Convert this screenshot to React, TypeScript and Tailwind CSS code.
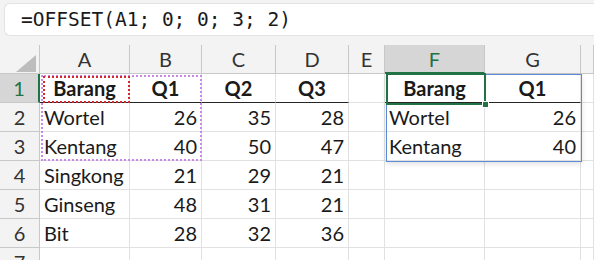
const COLS = ["A", "B", "C", "D", "E", "F", "G", ""];
const WIDTHS = "grid-cols-[40px_90px_72px_74px_73px_36px_100px_96px_13px]";

type Cell = { v: string; kind?: "head" | "text" | "num" };

const ROWS: Cell[][] = [
  [
    { v: "Barang", kind: "head" },
    { v: "Q1", kind: "head" },
    { v: "Q2", kind: "head" },
    { v: "Q3", kind: "head" },
    { v: "" },
    { v: "Barang", kind: "head" },
    { v: "Q1", kind: "head" },
    { v: "" },
  ],
  [
    { v: "Wortel", kind: "text" },
    { v: "26", kind: "num" },
    { v: "35", kind: "num" },
    { v: "28", kind: "num" },
    { v: "" },
    { v: "Wortel", kind: "text" },
    { v: "26", kind: "num" },
    { v: "" },
  ],
  [
    { v: "Kentang", kind: "text" },
    { v: "40", kind: "num" },
    { v: "50", kind: "num" },
    { v: "47", kind: "num" },
    { v: "" },
    { v: "Kentang", kind: "text" },
    { v: "40", kind: "num" },
    { v: "" },
  ],
  [
    { v: "Singkong", kind: "text" },
    { v: "21", kind: "num" },
    { v: "29", kind: "num" },
    { v: "21", kind: "num" },
    { v: "" },
    { v: "" },
    { v: "" },
    { v: "" },
  ],
  [
    { v: "Ginseng", kind: "text" },
    { v: "48", kind: "num" },
    { v: "31", kind: "num" },
    { v: "21", kind: "num" },
    { v: "" },
    { v: "" },
    { v: "" },
    { v: "" },
  ],
  [
    { v: "Bit", kind: "text" },
    { v: "28", kind: "num" },
    { v: "32", kind: "num" },
    { v: "36", kind: "num" },
    { v: "" },
    { v: "" },
    { v: "" },
    { v: "" },
  ],
  [{ v: "" }, { v: "" }, { v: "" }, { v: "" }, { v: "" }, { v: "" }, { v: "" }, { v: "" }],
];

function cellClass(kind: Cell["kind"], row: number, col: number) {
  const headerBorder = row === 0 && col !== 4 && col !== 7;
  const base = "flex h-[29px] items-center border-r border-[#e1e1e1] px-[4px] text-[20px] text-[#1a1a1a] bg-white";
  const bottom = headerBorder ? " border-b border-b-[#262626]" : " border-b border-[#e1e1e1]";
  if (kind === "head") return base + bottom + " justify-center font-bold";
  if (kind === "num") return base + bottom + " justify-end";
  return base + bottom;
}

export default function App() {
  return (
    <div className="h-[260px] w-[594px] overflow-hidden bg-[#f3f3f3] font-['Lato','Noto_Sans',sans-serif]">
      <div className="pl-[4px] pt-[3px]">
        <div className="flex h-[33px] items-center rounded-l-[6px] border border-r-0 border-[#e3e3e3] bg-white pl-[16px] font-['DejaVu_Sans_Mono',monospace] text-[19.5px] text-[#1a1a1a]">
          =OFFSET(A1; 0; 0; 3; 2)
        </div>
      </div>
      <div className="h-[9px]" />

      <div className="relative">
        <div className={`grid ${WIDTHS}`}>
          {/* corner */}
          <div className="relative h-[29px] border-r border-b border-[#c8c8c8] bg-[#f3f3f3]">
            <svg className="absolute left-[16px] top-[10px]" width="20" height="17" viewBox="0 0 20 17">
              <polygon points="0,17 20,17 20,0" fill="#bdbdbd" />
            </svg>
          </div>
          {COLS.map((c, i) =>
            c === "F" ? (
              <div
                key={c}
                className="flex h-[29px] items-center justify-center border-r border-b-2 border-r-[#c8c8c8] border-b-[#217346] bg-[#d6d6d6] text-[20px] text-[#217346]"
              >
                {c}
              </div>
            ) : (
              <div
                key={i}
                className="flex h-[29px] items-center justify-center border-r border-b border-[#c8c8c8] bg-[#f3f3f3] text-[20px] text-[#333]"
              >
                {c}
              </div>
            )
          )}

          {ROWS.map((row, r) => [
            r === 0 ? (
              <div
                key={`h${r}`}
                className="flex h-[29px] items-center justify-center border-r-2 border-b border-r-[#217346] border-b-[#c8c8c8] bg-[#d6d6d6] text-[20px] text-[#217346]"
              >
                1
              </div>
            ) : (
              <div
                key={`h${r}`}
                className="flex h-[29px] items-center justify-center border-r border-b border-[#c8c8c8] bg-[#f3f3f3] text-[20px] text-[#333]"
              >
                {r + 1}
              </div>
            ),
            ...row.map((cell, c) => (
              <div key={`${r}-${c}`} className={cellClass(cell.kind, r, c)}>
                {cell.v}
              </div>
            )),
          ])}
        </div>

        {/* copied range A1:B3 */}
        <div className="pointer-events-none absolute left-[41px] top-[30px] h-[86px] w-[161px] border-2 border-dotted border-[#c98ae6]" />
        {/* A1 */}
        <div className="pointer-events-none absolute left-[43px] top-[31px] h-[27px] w-[87px] border-2 border-dotted border-[#d9262e]" />
        {/* output range F1:G3 */}
        <div className="pointer-events-none absolute left-[386px] top-[29px] h-[88px] w-[196px] border border-[#5b8ad6] shadow-[0_2px_5px_rgba(0,0,0,0.12)]" />
        {/* active cell F1 */}
        <div className="pointer-events-none absolute left-[386px] top-[28px] h-[32px] w-[100px] border-2 border-[#217346]" />
        <div className="pointer-events-none absolute left-[482px] top-[56px] h-[7px] w-[7px] border border-white bg-[#217346]" />
      </div>
    </div>
  );
}
